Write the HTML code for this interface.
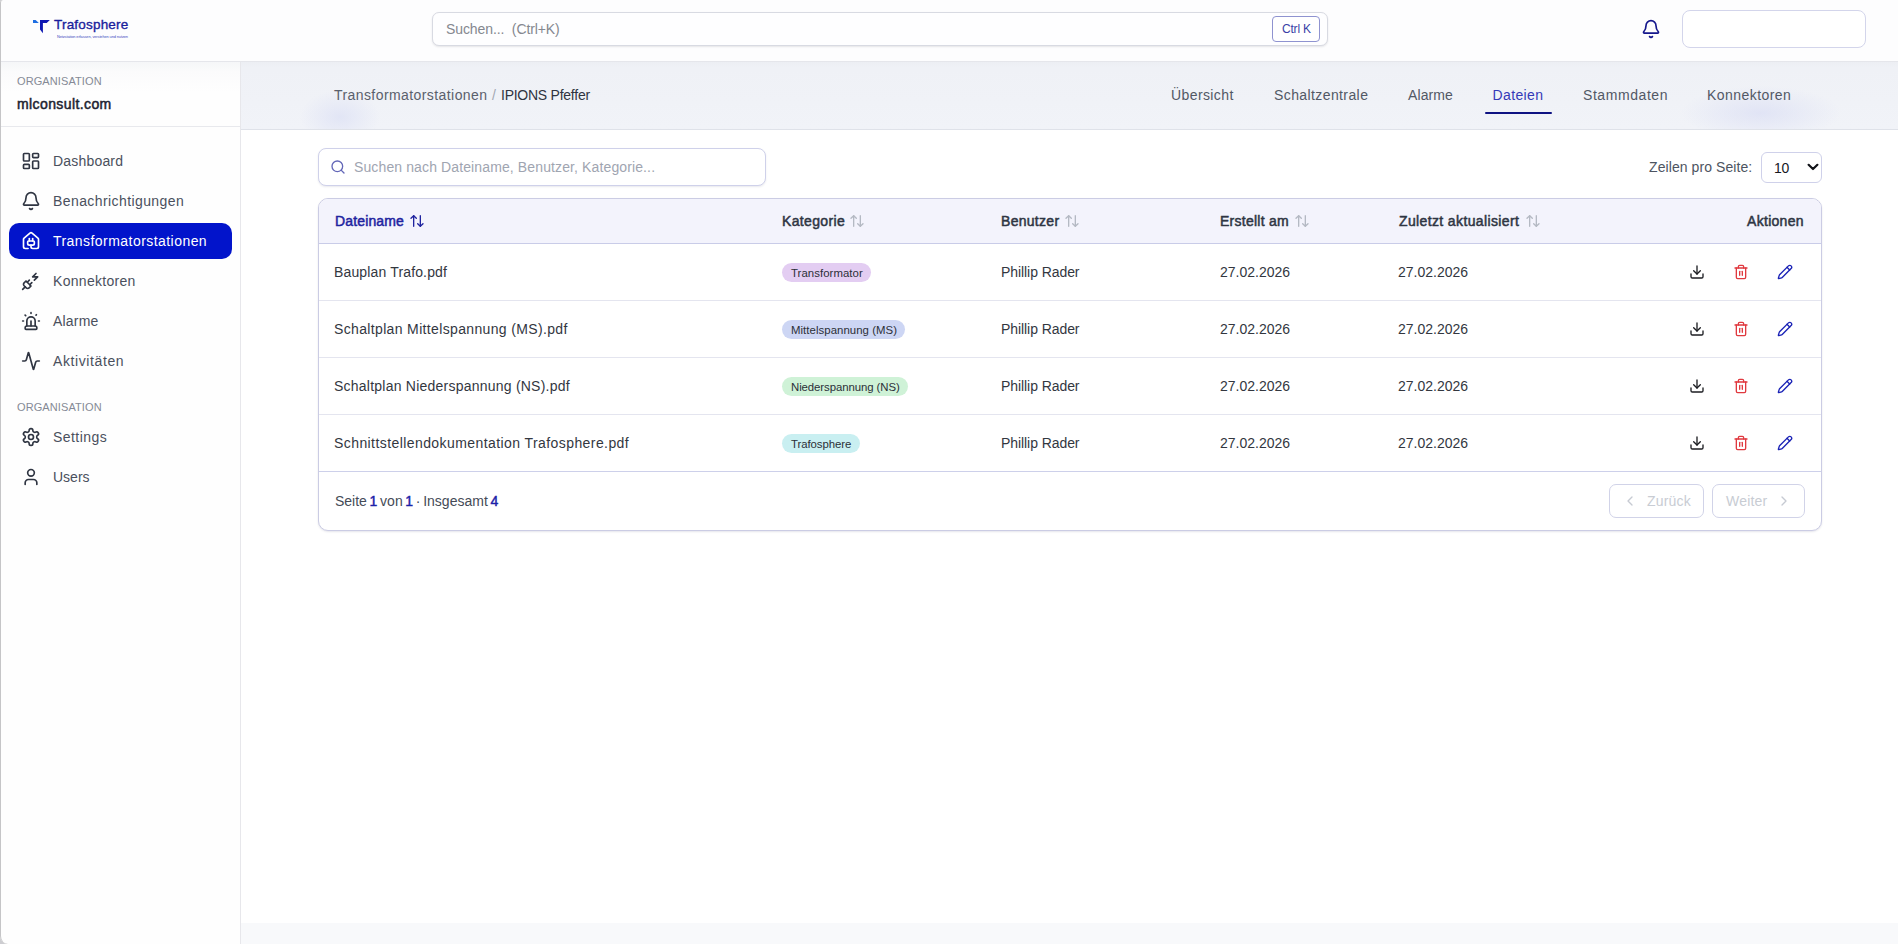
<!DOCTYPE html>
<html lang="de">
<head>
<meta charset="utf-8">
<title>Trafosphere – Dateien</title>
<style>
*{box-sizing:border-box;margin:0;padding:0}
html,body{width:1898px;height:944px;overflow:hidden;background:#ffffff}
body{font-family:"Liberation Sans",sans-serif;color:#2b303a;position:relative;font-size:14px}
.a{position:absolute}
.t{position:absolute;white-space:nowrap;line-height:1;font-size:14px}
svg.i{position:absolute;fill:none;stroke:currentColor;stroke-width:2;stroke-linecap:round;stroke-linejoin:round}
/* window frame */
#frame{position:absolute;left:0;top:0;width:1898px;height:944px;border-left:1px solid #c5c5c7;border-radius:3px 0 0 8px;box-shadow:0 0 0 14px #cdcdd1;pointer-events:none;z-index:50}
/* header */
#header{position:absolute;left:0;top:0;width:1898px;height:62px;background:#fdfdfe;border-bottom:1px solid #e5e6eb}
#sidebar{position:absolute;left:0;top:62px;width:241px;height:882px;background:#fefefe;border-right:1px solid #e7e7eb}
#orgsec{position:absolute;left:0;top:0;width:240px;height:65px;border-bottom:1px solid #e8e9ed;background:linear-gradient(#f5f6f8,#fbfbfc 10px,#fefefe 30px)}
#main{position:absolute;left:241px;top:62px;width:1657px;height:882px;background:#fff}
#crumbbar{position:absolute;left:0;top:0;width:1657px;height:68px;background:linear-gradient(#eceef3,#eff1f6 6px,#f0f2f7 40px,#f1f3f8);border-bottom:1px solid #dfe2e9}
#bottomstrip{position:absolute;left:0;top:861px;width:1657px;height:21px;background:#f8f9fb}
.nav{color:#4a505d}
.navicon{color:#2f3542}
.tab{color:#525865}
.th{font-weight:normal;-webkit-text-stroke:0.5px currentColor;color:#2e3543}
.sorti{color:#b4b9c3}
.td{color:#33373f}
.badge{font-size:11.4px;color:#2b2f37}
.num{color:#1c22a8;font-weight:normal;-webkit-text-stroke:0.45px currentColor}
.lbl{font-size:11px;color:#858a96;letter-spacing:0.1px}
</style>
</head>
<body>
<!-- ================= HEADER ================= -->
<div id="header">
  <!-- logo -->
  <svg class="a" style="left:30px;top:16px" width="24" height="20" viewBox="0 0 24 20">
    <path d="M3 3.9 L5.6 3.9 L8.8 6.9 L3 6.9 Z" fill="#1e6ee2"/>
    <path d="M10 3.9 L19.9 3.9 L16.7 6.9 L12.9 6.9 L12.9 17.2 L10 13.6 Z" fill="#0d16b2"/>
  </svg>
  <div class="t" style="left:54px;top:18px;font-size:13.5px;color:#1a1e9c;-webkit-text-stroke:0.35px #1a1e9c;letter-spacing:0.2px">Trafosphere</div>
  <div class="t" style="left:57px;top:34.5px;font-size:3.9px;color:#3e48c0;letter-spacing:-0.1px">Netzstation erfassen, verstehen und nutzen</div>

  <!-- global search -->
  <div class="a" style="left:432px;top:12px;width:896px;height:34px;border:1px solid #d8dae2;border-radius:7px;background:#fefeff;box-shadow:0 1px 2px rgba(20,24,40,.10)"></div>
  <div class="t" style="left:446px;top:22px;color:#85888f;letter-spacing:-0.1px">Suchen...&nbsp; (Ctrl+K)</div>
  <div class="a" style="left:1272px;top:16px;width:48px;height:26px;border:1px solid #8f93d0;border-radius:4px;background:#fff"></div>
  <div class="t" style="left:1282px;top:23px;font-size:12px;color:#3a3fa6;letter-spacing:-0.2px">Ctrl K</div>

  <!-- bell -->
  <svg class="i" style="left:1641px;top:19px;color:#15178c" width="20" height="20" viewBox="0 0 24 24"><path d="M10.268 21a2 2 0 0 0 3.464 0"/><path d="M3.262 15.326A1 1 0 0 0 4 17h16a1 1 0 0 0 .74-1.673C19.41 13.956 18 12.499 18 8A6 6 0 0 0 6 8c0 4.499-1.411 5.956-2.738 7.326"/></svg>
  <!-- user box -->
  <div class="a" style="left:1682px;top:10px;width:184px;height:38px;border:1px solid #d3d5eb;border-radius:8px;background:#fff"></div>
</div>

<!-- ================= SIDEBAR ================= -->
<div id="sidebar">
  <div id="orgsec"></div>
</div>
<div class="t lbl" style="left:17px;top:76px">ORGANISATION</div>
<div class="t" style="left:17px;top:97px;font-size:14px;-webkit-text-stroke:0.5px #1d2330;color:#1d2330;letter-spacing:0.4px">mlconsult.com</div>

<!-- nav items -->
<svg class="i navicon" style="left:21px;top:151px" width="20" height="20" viewBox="0 0 24 24"><rect width="7" height="9" x="3" y="3" rx="1"/><rect width="7" height="5" x="14" y="3" rx="1"/><rect width="7" height="9" x="14" y="12" rx="1"/><rect width="7" height="5" x="3" y="16" rx="1"/></svg>
<div class="t nav" style="left:53px;top:154px;letter-spacing:0.19px">Dashboard</div>

<svg class="i navicon" style="left:21px;top:191px" width="20" height="20" viewBox="0 0 24 24"><path d="M10.268 21a2 2 0 0 0 3.464 0"/><path d="M3.262 15.326A1 1 0 0 0 4 17h16a1 1 0 0 0 .74-1.673C19.41 13.956 18 12.499 18 8A6 6 0 0 0 6 8c0 4.499-1.411 5.956-2.738 7.326"/></svg>
<div class="t nav" style="left:53px;top:194px;letter-spacing:0.41px">Benachrichtigungen</div>

<div class="a" style="left:9px;top:223px;width:223px;height:36px;border-radius:10px;background:#0214cb"></div>
<svg class="i" style="left:21px;top:231px;color:#fff" width="20" height="20" viewBox="0 0 24 24"><path d="M10 12V8.964"/><path d="M14 12V8.964"/><path d="M15 12a1 1 0 0 1 1 1v2a2 2 0 0 1-2 2h-4a2 2 0 0 1-2-2v-2a1 1 0 0 1 1-1z"/><path d="M8.5 21H5a2 2 0 0 1-2-2v-9a2 2 0 0 1 .709-1.528l7-5.999a2 2 0 0 1 2.582 0l7 5.999A2 2 0 0 1 21 10v9a2 2 0 0 1-2 2h-5a2 2 0 0 1-2-2v-2"/></svg>
<div class="t" style="left:53px;top:234px;color:#ffffff;letter-spacing:0.45px">Transformatorstationen</div>

<svg class="i navicon" style="left:21px;top:271px" width="20" height="20" viewBox="0 0 24 24"><path d="M6.3 20.3a2.4 2.4 0 0 0 3.4 0L12 18l-6-6-2.3 2.3a2.4 2.4 0 0 0 0 3.4Z"/><path d="m2 22 3-3"/><path d="M7.5 13.5 10 11"/><path d="M10.5 16.5 13 14"/><path d="m18 3-4 4h6l-4 4"/></svg>
<div class="t nav" style="left:53px;top:274px;letter-spacing:0.3px">Konnektoren</div>

<svg class="i navicon" style="left:21px;top:311px" width="20" height="20" viewBox="0 0 24 24"><path d="M7 18v-6a5 5 0 1 1 10 0v6"/><path d="M5 21a1 1 0 0 0 1 1h12a1 1 0 0 0 1-1v-1a2 2 0 0 0-2-2H7a2 2 0 0 0-2 2z"/><path d="M21 12h1"/><path d="M18.5 4.5 18 5"/><path d="M2 12h1"/><path d="M12 2v1"/><path d="m4.929 4.929.707.707"/><path d="M12 12v6"/></svg>
<div class="t nav" style="left:53px;top:314px;letter-spacing:0.2px">Alarme</div>

<svg class="i navicon" style="left:21px;top:351px" width="20" height="20" viewBox="0 0 24 24"><path d="M22 12h-2.48a2 2 0 0 0-1.93 1.46l-2.35 8.36a.25.25 0 0 1-.48 0L9.24 2.18a.25.25 0 0 0-.48 0l-2.35 8.36A2 2 0 0 1 4.49 12H2"/></svg>
<div class="t nav" style="left:53px;top:354px;letter-spacing:0.6px">Aktivitäten</div>

<div class="t lbl" style="left:17px;top:402px">ORGANISATION</div>

<svg class="i navicon" style="left:21px;top:427px" width="20" height="20" viewBox="0 0 24 24"><path d="M12.22 2h-.44a2 2 0 0 0-2 2v.18a2 2 0 0 1-1 1.73l-.43.25a2 2 0 0 1-2 0l-.15-.08a2 2 0 0 0-2.73.73l-.22.38a2 2 0 0 0 .73 2.73l.15.1a2 2 0 0 1 1 1.72v.51a2 2 0 0 1-1 1.74l-.15.09a2 2 0 0 0-.73 2.73l.22.38a2 2 0 0 0 2.73.73l.15-.08a2 2 0 0 1 2 0l.43.25a2 2 0 0 1 1 1.73V20a2 2 0 0 0 2 2h.44a2 2 0 0 0 2-2v-.18a2 2 0 0 1 1-1.73l.43-.25a2 2 0 0 1 2 0l.15.08a2 2 0 0 0 2.73-.73l.22-.39a2 2 0 0 0-.73-2.73l-.15-.08a2 2 0 0 1-1-1.74v-.5a2 2 0 0 1 1-1.74l.15-.09a2 2 0 0 0 .73-2.73l-.22-.38a2 2 0 0 0-2.73-.73l-.15.08a2 2 0 0 1-2 0l-.43-.25a2 2 0 0 1-1-1.73V4a2 2 0 0 0-2-2z"/><circle cx="12" cy="12" r="3"/></svg>
<div class="t nav" style="left:53px;top:430px;letter-spacing:0.44px">Settings</div>

<svg class="i navicon" style="left:21px;top:467px" width="20" height="20" viewBox="0 0 24 24"><path d="M19 21v-2a4 4 0 0 0-4-4H9a4 4 0 0 0-4 4v2"/><circle cx="12" cy="7" r="4"/></svg>
<div class="t nav" style="left:53px;top:470px">Users</div>

<!-- ================= MAIN ================= -->
<div id="main">
  <div id="crumbbar" style="overflow:hidden"><div class="a" style="left:59px;top:28px;width:80px;height:54px;background:radial-gradient(closest-side,rgba(222,226,245,.8),rgba(222,226,245,0))"></div><div class="a" style="left:1440px;top:24px;width:160px;height:54px;background:radial-gradient(closest-side,rgba(218,222,244,.7),rgba(218,222,244,0))"></div></div>
  <div id="bottomstrip"></div>
</div>
<!-- breadcrumb -->
<div class="t" style="left:334px;top:88px;color:#5a606c;letter-spacing:0.42px">Transformatorstationen</div>
<div class="t" style="left:492px;top:88px;color:#a3a8b2">/</div>
<div class="t" style="left:501px;top:88px;color:#2f3440;letter-spacing:-0.25px">IPIONS Pfeffer</div>

<!-- tabs -->
<div class="t tab" style="left:1171px;top:88px;letter-spacing:0.4px">Übersicht</div>
<div class="t tab" style="left:1274px;top:88px;letter-spacing:0.4px">Schaltzentrale</div>
<div class="t tab" style="left:1408px;top:88px;letter-spacing:0.1px">Alarme</div>
<div class="t tab" style="left:1492.5px;top:88px;color:#343ab8;letter-spacing:0.37px">Dateien</div>
<div class="a" style="left:1485px;top:111.5px;width:67px;height:2.5px;background:#0e1282;border-radius:1px"></div>
<div class="t tab" style="left:1583px;top:88px;letter-spacing:0.57px">Stammdaten</div>
<div class="t tab" style="left:1707px;top:88px;letter-spacing:0.45px">Konnektoren</div>

<!-- file search -->
<div class="a" style="left:318px;top:148px;width:448px;height:38px;border:1px solid #cfd1ea;border-radius:8px;background:#fff;box-shadow:0 1px 2px rgba(40,40,90,.10)"></div>
<svg class="i" style="left:330px;top:159px;color:#6367b8" width="16" height="16" viewBox="0 0 24 24"><circle cx="11" cy="11" r="8"/><path d="m21 21-4.3-4.3"/></svg>
<div class="t" style="left:354px;top:160px;color:#9fa5b1;letter-spacing:0.12px">Suchen nach Dateiname, Benutzer, Kategorie...</div>

<!-- rows per page -->
<div class="t" style="left:1649px;top:160px;color:#4d5461;letter-spacing:0.08px">Zeilen pro Seite:</div>
<div class="a" style="left:1761px;top:152px;width:61px;height:31px;border:1px solid #cfd1ea;border-radius:6px;background:#fff"></div>
<div class="t" style="left:1774px;top:161px;color:#16181f;letter-spacing:-0.4px">10</div>
<svg class="a" style="left:1807px;top:163px" width="12" height="8" viewBox="0 0 12 8"><path d="M1.6 1.8 L6 6 L10.4 1.8" fill="none" stroke="#111318" stroke-width="2.2" stroke-linecap="round" stroke-linejoin="round"/></svg>

<!-- table -->
<div class="a" style="left:318px;top:198px;width:1504px;height:333px;border:1px solid #cbcce4;border-radius:10px;background:#fff;box-shadow:0 1px 2px rgba(40,40,90,.12);overflow:hidden">
  <div class="a" style="left:0;top:0;width:1502px;height:45px;background:#f3f3fc;border-bottom:1px solid #c9cce8"></div>
  <div class="a" style="left:0;top:101px;width:1502px;height:1px;background:#e4e5ef"></div>
  <div class="a" style="left:0;top:158px;width:1502px;height:1px;background:#e4e5ef"></div>
  <div class="a" style="left:0;top:215px;width:1502px;height:1px;background:#e4e5ef"></div>
  <div class="a" style="left:0;top:272px;width:1502px;height:1px;background:#cdd0ea"></div>
</div>

<!-- header cells -->
<div class="t th" style="left:335px;top:214px;color:#1f239f;letter-spacing:0.15px">Dateiname</div>
<svg class="i" style="left:409px;top:213px;color:#1f239f" width="16" height="16" viewBox="0 0 24 24"><path d="m21 16-4 4-4-4"/><path d="M17 20V4"/><path d="m3 8 4-4 4 4"/><path d="M7 4v16"/></svg>
<div class="t th" style="left:782px;top:214px;letter-spacing:0.35px">Kategorie</div>
<svg class="i sorti" style="left:849px;top:213px" width="16" height="16" viewBox="0 0 24 24"><path d="m21 16-4 4-4-4"/><path d="M17 20V4"/><path d="m3 8 4-4 4 4"/><path d="M7 4v16"/></svg>
<div class="t th" style="left:1001px;top:214px;letter-spacing:0.29px">Benutzer</div>
<svg class="i sorti" style="left:1064px;top:213px" width="16" height="16" viewBox="0 0 24 24"><path d="m21 16-4 4-4-4"/><path d="M17 20V4"/><path d="m3 8 4-4 4 4"/><path d="M7 4v16"/></svg>
<div class="t th" style="left:1220px;top:214px;letter-spacing:0.25px">Erstellt am</div>
<svg class="i sorti" style="left:1294px;top:213px" width="16" height="16" viewBox="0 0 24 24"><path d="m21 16-4 4-4-4"/><path d="M17 20V4"/><path d="m3 8 4-4 4 4"/><path d="M7 4v16"/></svg>
<div class="t th" style="left:1399px;top:214px;letter-spacing:0.37px">Zuletzt aktualisiert</div>
<svg class="i sorti" style="left:1525px;top:213px" width="16" height="16" viewBox="0 0 24 24"><path d="m21 16-4 4-4-4"/><path d="M17 20V4"/><path d="m3 8 4-4 4 4"/><path d="M7 4v16"/></svg>
<div class="t th" style="left:1747px;top:214px;letter-spacing:0.3px">Aktionen</div>

<!-- row 1 -->
<div class="t td" style="left:334px;top:265px;letter-spacing:0.15px">Bauplan Trafo.pdf</div>
<div class="a" style="left:782px;top:263px;width:89px;height:19px;border-radius:10px;background:#e3cdf2"></div>
<div class="t badge" style="left:791px;top:268px;letter-spacing:0.05px">Transformator</div>
<div class="t td" style="left:1001px;top:265px;letter-spacing:-0.07px">Phillip Rader</div>
<div class="t td" style="left:1220px;top:265px">27.02.2026</div>
<div class="t td" style="left:1398px;top:265px">27.02.2026</div>
<svg class="i" style="left:1689px;top:264px;color:#1c1d22" width="16" height="16" viewBox="0 0 24 24"><path d="M12 15V3"/><path d="M21 15v4a2 2 0 0 1-2 2H5a2 2 0 0 1-2-2v-4"/><path d="m7 10 5 5 5-5"/></svg>
<svg class="i" style="left:1733px;top:264px;color:#e0393f" width="16" height="16" viewBox="0 0 24 24"><path d="M3 6h18"/><path d="M19 6v14c0 1-1 2-2 2H7c-1 0-2-1-2-2V6"/><path d="M8 6V4c0-1 1-2 2-2h4c1 0 2 1 2 2v2"/><path d="M10 11v6"/><path d="M14 11v6"/></svg>
<svg class="i" style="left:1777px;top:264px;color:#1a22b6" width="16" height="16" viewBox="0 0 24 24"><path d="M21.174 6.812a1 1 0 0 0-3.986-3.987L3.842 16.174a2 2 0 0 0-.5.83l-1.321 4.352a.5.5 0 0 0 .623.622l4.353-1.32a2 2 0 0 0 .83-.497z"/><path d="m15 5 4 4"/></svg>
<!-- row 2 -->
<div class="t td" style="left:334px;top:322px;letter-spacing:0.35px">Schaltplan Mittelspannung (MS).pdf</div>
<div class="a" style="left:782px;top:320px;width:123px;height:19px;border-radius:10px;background:#cdd6f4"></div>
<div class="t badge" style="left:791px;top:325px;letter-spacing:0.05px">Mittelspannung (MS)</div>
<div class="t td" style="left:1001px;top:322px;letter-spacing:-0.07px">Phillip Rader</div>
<div class="t td" style="left:1220px;top:322px">27.02.2026</div>
<div class="t td" style="left:1398px;top:322px">27.02.2026</div>
<svg class="i" style="left:1689px;top:321px;color:#1c1d22" width="16" height="16" viewBox="0 0 24 24"><path d="M12 15V3"/><path d="M21 15v4a2 2 0 0 1-2 2H5a2 2 0 0 1-2-2v-4"/><path d="m7 10 5 5 5-5"/></svg>
<svg class="i" style="left:1733px;top:321px;color:#e0393f" width="16" height="16" viewBox="0 0 24 24"><path d="M3 6h18"/><path d="M19 6v14c0 1-1 2-2 2H7c-1 0-2-1-2-2V6"/><path d="M8 6V4c0-1 1-2 2-2h4c1 0 2 1 2 2v2"/><path d="M10 11v6"/><path d="M14 11v6"/></svg>
<svg class="i" style="left:1777px;top:321px;color:#1a22b6" width="16" height="16" viewBox="0 0 24 24"><path d="M21.174 6.812a1 1 0 0 0-3.986-3.987L3.842 16.174a2 2 0 0 0-.5.83l-1.321 4.352a.5.5 0 0 0 .623.622l4.353-1.32a2 2 0 0 0 .83-.497z"/><path d="m15 5 4 4"/></svg>
<!-- row 3 -->
<div class="t td" style="left:334px;top:379px;letter-spacing:0.23px">Schaltplan Niederspannung (NS).pdf</div>
<div class="a" style="left:782px;top:377px;width:126px;height:19px;border-radius:10px;background:#cff2d7"></div>
<div class="t badge" style="left:791px;top:382px;letter-spacing:-0.08px">Niederspannung (NS)</div>
<div class="t td" style="left:1001px;top:379px;letter-spacing:-0.07px">Phillip Rader</div>
<div class="t td" style="left:1220px;top:379px">27.02.2026</div>
<div class="t td" style="left:1398px;top:379px">27.02.2026</div>
<svg class="i" style="left:1689px;top:378px;color:#1c1d22" width="16" height="16" viewBox="0 0 24 24"><path d="M12 15V3"/><path d="M21 15v4a2 2 0 0 1-2 2H5a2 2 0 0 1-2-2v-4"/><path d="m7 10 5 5 5-5"/></svg>
<svg class="i" style="left:1733px;top:378px;color:#e0393f" width="16" height="16" viewBox="0 0 24 24"><path d="M3 6h18"/><path d="M19 6v14c0 1-1 2-2 2H7c-1 0-2-1-2-2V6"/><path d="M8 6V4c0-1 1-2 2-2h4c1 0 2 1 2 2v2"/><path d="M10 11v6"/><path d="M14 11v6"/></svg>
<svg class="i" style="left:1777px;top:378px;color:#1a22b6" width="16" height="16" viewBox="0 0 24 24"><path d="M21.174 6.812a1 1 0 0 0-3.986-3.987L3.842 16.174a2 2 0 0 0-.5.83l-1.321 4.352a.5.5 0 0 0 .623.622l4.353-1.32a2 2 0 0 0 .83-.497z"/><path d="m15 5 4 4"/></svg>
<!-- row 4 -->
<div class="t td" style="left:334px;top:436px;letter-spacing:0.42px">Schnittstellendokumentation Trafosphere.pdf</div>
<div class="a" style="left:782px;top:434px;width:78px;height:19px;border-radius:10px;background:#c9eff1"></div>
<div class="t badge" style="left:791px;top:439px;letter-spacing:-0.06px">Trafosphere</div>
<div class="t td" style="left:1001px;top:436px;letter-spacing:-0.07px">Phillip Rader</div>
<div class="t td" style="left:1220px;top:436px">27.02.2026</div>
<div class="t td" style="left:1398px;top:436px">27.02.2026</div>
<svg class="i" style="left:1689px;top:435px;color:#1c1d22" width="16" height="16" viewBox="0 0 24 24"><path d="M12 15V3"/><path d="M21 15v4a2 2 0 0 1-2 2H5a2 2 0 0 1-2-2v-4"/><path d="m7 10 5 5 5-5"/></svg>
<svg class="i" style="left:1733px;top:435px;color:#e0393f" width="16" height="16" viewBox="0 0 24 24"><path d="M3 6h18"/><path d="M19 6v14c0 1-1 2-2 2H7c-1 0-2-1-2-2V6"/><path d="M8 6V4c0-1 1-2 2-2h4c1 0 2 1 2 2v2"/><path d="M10 11v6"/><path d="M14 11v6"/></svg>
<svg class="i" style="left:1777px;top:435px;color:#1a22b6" width="16" height="16" viewBox="0 0 24 24"><path d="M21.174 6.812a1 1 0 0 0-3.986-3.987L3.842 16.174a2 2 0 0 0-.5.83l-1.321 4.352a.5.5 0 0 0 .623.622l4.353-1.32a2 2 0 0 0 .83-.497z"/><path d="m15 5 4 4"/></svg>

<!-- footer -->
<div class="t" style="left:335px;top:494px;color:#454b57;letter-spacing:0px;word-spacing:-1.2px">Seite <b class="num">1</b> von <b class="num">1</b> · Insgesamt <b class="num">4</b></div>
<div class="a" style="left:1609px;top:484px;width:95px;height:34px;border:1px solid #d1d3e8;border-radius:7px;background:#fff"></div>
<svg class="i" style="left:1622px;top:493px;color:#c6cad2" width="16" height="16" viewBox="0 0 24 24"><path d="m15 18-6-6 6-6"/></svg>
<div class="t" style="left:1647px;top:494px;color:#c8ccd3;letter-spacing:0.2px">Zurück</div>
<div class="a" style="left:1712px;top:484px;width:93px;height:34px;border:1px solid #d1d3e8;border-radius:7px;background:#fff"></div>
<div class="t" style="left:1726px;top:494px;color:#c8ccd3;letter-spacing:0.2px">Weiter</div>
<svg class="i" style="left:1776px;top:493px;color:#c6cad2" width="16" height="16" viewBox="0 0 24 24"><path d="m9 18 6-6-6-6"/></svg>


<div id="frame"></div>
</body>
</html>
